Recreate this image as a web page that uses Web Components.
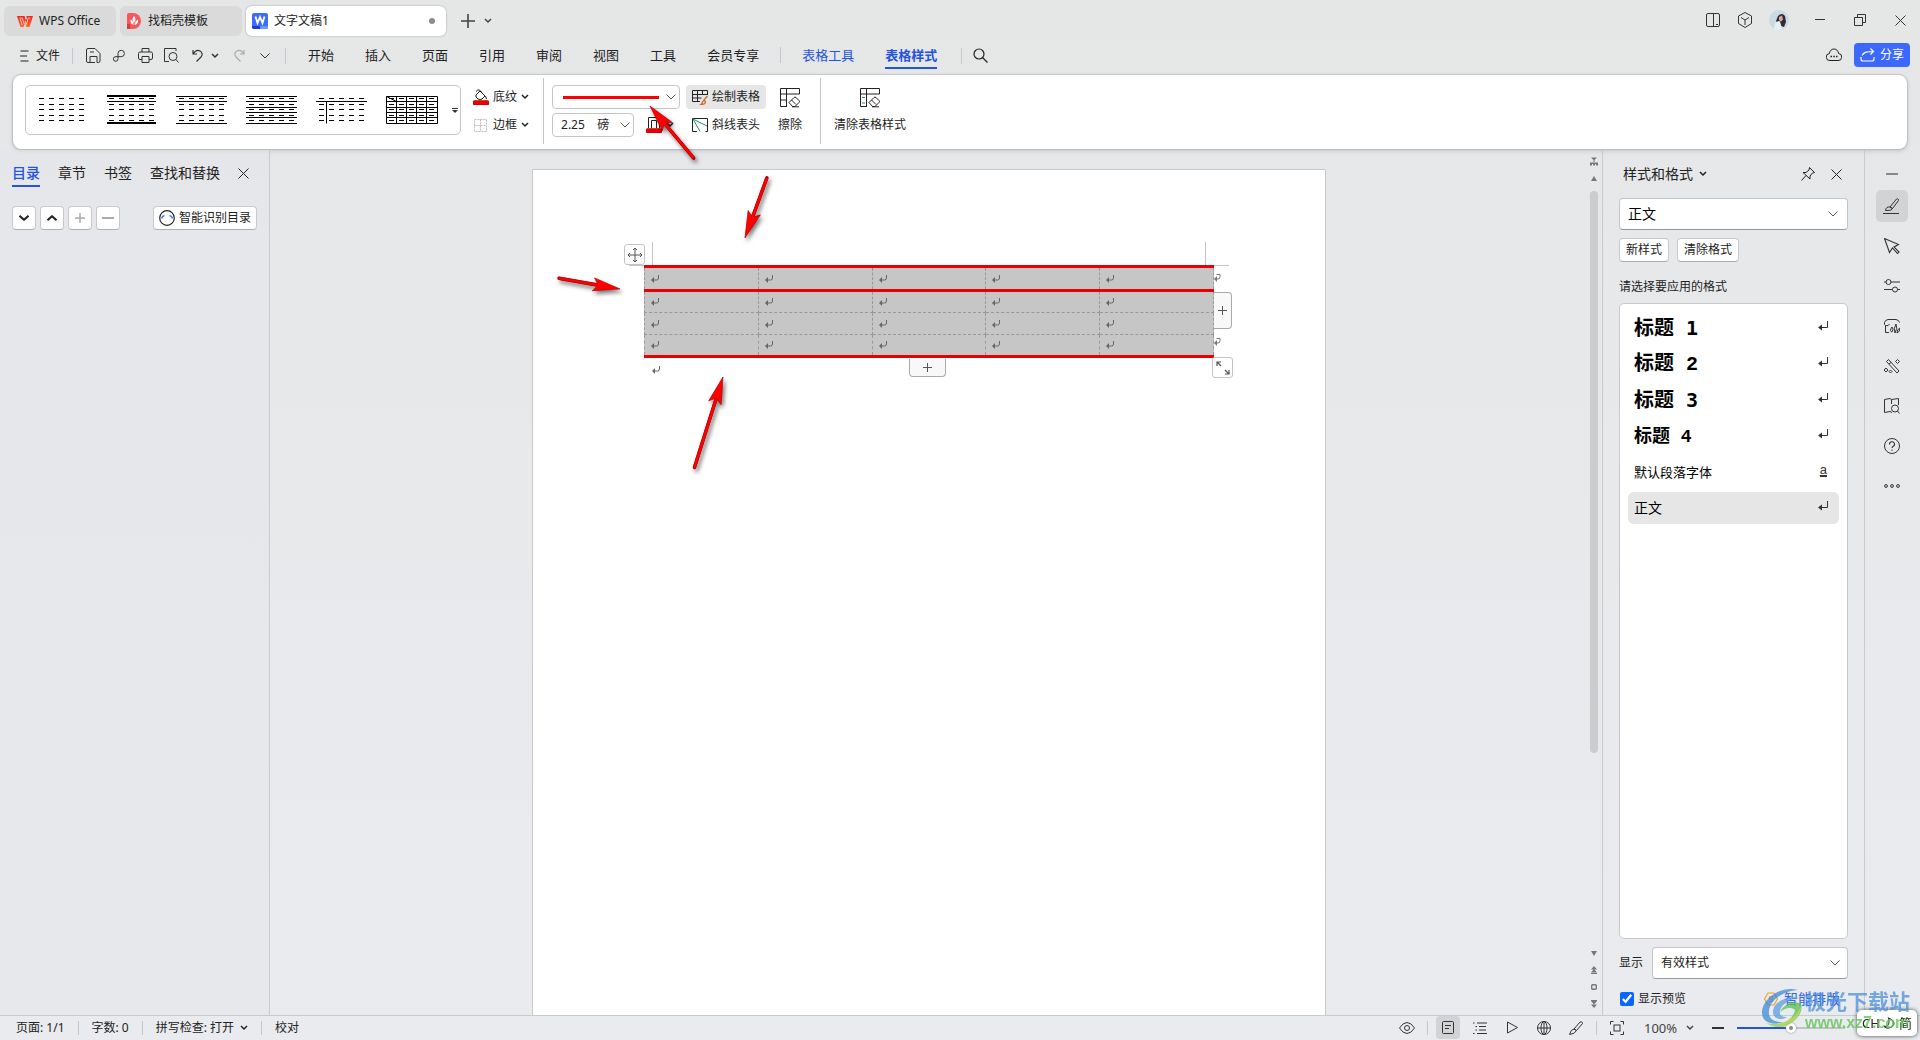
<!DOCTYPE html>
<html lang="zh-CN">
<head>
<meta charset="utf-8">
<title>WPS Office</title>
<style>
  html, body { margin: 0; height: 100%; }
  body {
    font: 12px/16px "Noto Sans", "Noto Sans CJK SC", sans-serif;
    color: #222;
    background: linear-gradient(180deg, #e5e6e6 0, #e7e8ea 25%, #eaebee 100%);
    overflow: hidden;
  }
</style>
</head>
<body>
<wps-app></wps-app>
<script>
const BASE = `
  *, *::before { box-sizing: border-box; }
  button, select, input { font: inherit; color: inherit; margin: 0; }
  button { background: none; border: 0; padding: 0; display: inline-flex; align-items: center; justify-content: center; white-space: nowrap; }
  a { color: inherit; text-decoration: none; }
  .sep { width: 1px; height: 16px; background: #c6c7c9; flex: none; }
`;
function define(name, css, html) {
  customElements.define(name, class extends HTMLElement {
    constructor() {
      super();
      const t = document.createElement('template');
      t.innerHTML = `<style>${BASE}${css}</style>${typeof html === 'function' ? html(this) : html}`;
      this.attachShadow({ mode: 'open' }).append(t.content.cloneNode(true));
    }
  });
}

/* Icon set: [width, height, markup] */
const ICONS = {
  wps: [16, 11, '<defs><linearGradient id="g" x1="0" y1="0" x2="0" y2="1"><stop offset="0" stop-color="#f4221f"/><stop offset="1" stop-color="#ff6a21"/></linearGradient></defs><path d="M0 0h7.500l1.200 4L10 2.500 9.200 0H16l-3.500 11H9.500L8 7l-1.500 4H3.500z" fill="url(#g)" stroke="none"/><path d="M2.800 2h2.400l2 6M13.300 2h-2l-2 6.500M5.200 9L3 2.500M8 5l1.200 3.500" stroke="#e9e9e8" stroke-width=".8"/>'],
  docer: [14, 16, '<path d="M0 2q0-2 2-2h4a8 8 0 0 1 0 16H0z" fill="#f4585a" stroke="none"/><path d="M0 11h3v5H0z" fill="#d83c40" stroke="none"/><path d="M7 3c2 2 2 4 0 7-2-3-2-5 0-7zM3.500 6.500c2.500 1 3 3 3 5.500-2.500-1-3.500-3-3-5.500zM11 6.500c-2 1-3.500 3-3.500 5.500 3-.5 4-3 3.500-5.500z" fill="#fff" stroke="none"/>'],
  word: [16, 16, '<rect width="16" height="16" rx="2" fill="#3e6bff" stroke="none"/><path d="M0 13h8v3H2q-2 0-2-2z" fill="#1e3fc4" stroke="none"/><path d="M8 13h8q0 3-2 3H8z" fill="#5b9bff" stroke="none"/><path d="M3.500 3.500l2 6.500L8 4l2.500 6 2-6.500" stroke="#fff" stroke-width="1.800"/>'],
  plus: [14, 14, '<path d="M7 0v14M0 7h14" stroke-width="1.600"/>'],
  plus10: [10, 10, '<path d="M5 0v10M0 5h10" stroke-width="1.400"/>'],
  down: [8, 6, '<path d="M1 1l3 3 3-3" stroke-width="1.500"/>'],
  down2: [10, 6, '<path d="M.5 .8l4.500 4 4.500-4" stroke-width="2"/>'],
  up2: [10, 6, '<path d="M.5 5.200l4.500-4 4.500 4" stroke-width="2"/>'],
  downwide: [10, 6, '<path d="M.5.500L5 5l4.500-4.500"/>'],
  panes: [15, 15, '<rect x=".5" y=".5" width="13" height="13" rx="1.500"/><path d="M7.500.500v13M10 11.500h2"/>'],
  cube: [16, 16, '<path d="M8 .5l6.500 3.500v7.500L8 15.500 1.500 11.500V4zM4 5.500L8 8l4-2.500M8 8v5"/>'],
  avatar: [20, 20, '<circle cx="10" cy="10" r="10" fill="#c9dae3" stroke="none"/><path d="M9 6q4-4 7 0l1 6-2 5-3-1-1-5-3 1-1-1z" fill="#332b33" stroke="none"/><path d="M10 7l3-1.500 1 4-2 2-2-1.500z" fill="#d9aaa4" stroke="none"/><path d="M5 19l1-6 4-2 2 4 1 4q-4 2-8 0z" fill="#e6f0f4" stroke="none"/>'],
  min: [10, 2, '<path d="M0 .5h10"/>'],
  restore: [12, 12, '<path d="M.5 3.500h8v8h-8zM3.500 3.500v-3h8v8h-3"/>'],
  close: [11, 11, '<path d="M.5.500l10 10M10.500.500l-10 10"/>'],
  menu: [9, 12, '<path d="M.5 1h8M0 6h7M.5 11h8"/>'],
  save: [15, 15, '<path d="M4 14.500H2q-1.500 0-1.500-1.500V2Q.5.500 2 .5h7l5 5V13q0 1.500-1.500 1.500H11M4 14.500v-6h7v6M4 14.500h5M4 4h4"/>'],
  sharelink: [12, 13, '<path d="M5 9.500v-5a3.200 3.200 0 1 1 3.200 3.200H3a2.300 2.300 0 1 0 2 2"/>'],
  print: [15, 15, '<path d="M4 4V.500h7V4M4 11.500H2q-1.500 0-1.500-1.500V5.500Q.5 4 2 4h11q1.500 0 1.500 1.500V10q0 1.500-1.500 1.500h-2M4 8.500h7v6H4z"/>'],
  preview: [15, 15, '<path d="M.5 3V.500H12V3M.5 2v11.500H5"/><circle cx="9" cy="8.500" r="4"/><path d="M12 11.500l2.500 3"/>'],
  undo: [11, 13, '<path d="M1 1v4h4M1 5c2-3 5-4 7-3s3 3.500 1 6l-4.500 4.500" stroke-width="1.200"/>'],
  redo: [11, 13, '<path d="M10 1v4H6M10 5C8 2 5 1 3 2s-3 3.500-1 6l4.500 4.500" stroke-width="1.200"/>'],
  search: [15, 15, '<circle cx="6" cy="6" r="5" stroke-width="1.200"/><path d="M9.500 9.500l5 5" stroke-width="1.200"/>'],
  cloud: [16, 14, '<path d="M4 12.500a3.500 3.500 0 0 1-.5-7 4.500 4.500 0 0 1 9 0 3.500 3.500 0 0 1-.5 7z"/><path d="M4.500 8.500h1.500M7.300 8.500h1.500M10 8.500h1.500" stroke-width="1.500"/>'],
  share: [15, 14, '<path d="M1 9v2q0 2 2 2h9q2 0 2-2V9M2 7.500C4 4 7 3.500 13.500 3.500M10.500.500l3 3-3 3" stroke-width="1.200"/>'],
  fill: [16, 16, '<path d="M3 6l4-4 5 5-3 3q-2 1-4 0L3 8zM3 2.500q3-4 6 1.500M12.500 7l1 3"/><rect x="0" y="11.500" width="16" height="4.500" rx="1.500" fill="#e00" stroke="#900" stroke-width=".5"/>'],
  border: [13, 13, '<path d="M.5.500h12v12H.500zM6.500.500v12M.5 6.500h12" stroke="#bbb" stroke-dasharray="2 1"/>'],
  pencolor: [16, 16, '<path d="M2.500 11V.500h11V11M5.500 11V3.500h5V11"/><rect x="0" y="11.500" width="16" height="4.500" rx="1.500" fill="#e00" stroke="#900" stroke-width=".5"/>'],
  draw: [16, 16, '<path d="M8 12.500H.500V1.500h15V6M.5 5.500h15M.5 9h9M5.500 1.500v11M10.500 1.500V6"/><path d="M15.500 7l-4 4.500M9 15.500q1.500-1 1.500-3l2-1 1 1q0 3-4.500 3z" stroke="#d0662a" stroke-width="1.200"/>'],
  slash: [16, 14, '<path d="M5 13.500H.500V.500h15v13h-2"/><path d="M1 1l14 7M1 1l7 12.500" stroke="#1f8f6f"/>'],
  erase: [20, 20, '<path d="M7 18.500H.500V.500h19V6H.500M6.500.500v18M.5 12h6"/><path d="M9 14.500l5-5q1-1 2 0l3 3q1 1 0 2l-4 4h-2.500zM11.500 12l4.500 4.500M12 18.800h7"/>'],
  clear: [20, 20, '<path d="M7 18.500H.500V.500h19V6H.500M6.500.500v18"/><path d="M2 9.500h3M2 15h3" stroke="#1f8f6f"/><path d="M9 14.500l5-5q1-1 2 0l3 3q1 1 0 2l-4 4h-2.500zM11.500 12l4.500 4.500M12 18.800h7"/>'],
  more: [6, 5, '<path d="M0 .5h6"/><path d="M0 2h6L3 5z" fill="currentColor" stroke="none"/>'],
  smart: [16, 16, '<circle cx="8" cy="8" r="7.300" stroke-width="1.200"/><path d="M2.500 8.500q.5-2.500 3-3M13.500 8.500q-.5-2.500-3-3" stroke="#4874e8" stroke-width="1.500"/>'],
  minus: [12, 2, '<path d="M0 1h12" stroke-width="2"/>'],
  pin: [14, 14, '<path d="M8.500.500l5 5-2 .5-2.500 3v3L2 5.500h3L8 3zM5 8.500L.500 13.500"/>'],
  brush: [17, 16, '<path d="M7 9l6.500-8q1.500-.5 2 .5v1L9.500 10.500zM7 9q-4-.5-4.500 3.500 4.500 0 5.500-.5 1.500-1 1.500-1.500zM0 15.500h16"/>'],
  pointer: [16, 16, '<path d="M.5.500l14 6L10 9l5 5-1.500 1.500L8.500 10l-3 4.500z" stroke-width="1.100"/>'],
  sliders: [16, 14, '<circle cx="4.500" cy="3" r="2.500"/><circle cx="11" cy="10.500" r="2.500"/><path d="M7 3h9M0 3h2M0 10.500h8.500M13.500 10.500H16"/>'],
  gallery: [16, 15, '<path d="M5 13.500H1.500v-7Q0 6 .5 3.500 1 1 4 .500h8q3 .5 3.500 3M1.500 6.500q3 1 4-1.500M8 13q-3-1 0-5 2 2 0 5zM11 14q-2-4 1-9 2 4-1 9zM13 14q0-4 3-5 0 4-3 5z"/>'],
  tools: [16, 15, '<path d="M2.500 2.500l2-2 10.500 11.500-2 2zM5 5l2-1.500"/><path d="M13.500.500l2 2-2 2-2-2zM2 9l2 2-2 2-2-2zM6.500 11l1.500 1.500L6.500 14 5 12.500z"/>'],
  book: [16, 16, '<path d="M6 13.500L.500 14.500V1.500L6 .5l1.500 1L14.500.500V7M7.500 1.500V6M6 13.500l2 1"/><circle cx="11" cy="10.500" r="3.500"/><path d="M13.500 13l2 2.500"/>'],
  help: [16, 16, '<circle cx="8" cy="8" r="7.500"/><path d="M5.500 6.500a2.500 2.500 0 1 1 3.500 2q-1 .5-1 1.500M8 11.500v1.200" stroke-width="1.100"/>'],
  dots: [16, 4, '<circle cx="2" cy="2" r="1.400"/><circle cx="8" cy="2" r="1.400"/><circle cx="14" cy="2" r="1.400"/>'],
  ret: [10, 10, '<path d="M9.500 0v6.500H2"/><path d="M0 6.500l4-3v6z" fill="currentColor" stroke="none"/>'],
  mark: [8, 8, '<path d="M7.500 0v3q0 2-2 2H2" stroke="#666"/><path d="M0 5l3-3v6z" fill="#666" stroke="none"/>'],
  endmark: [8, 8, '<path d="M2.500 .5h3.500v2q0 2.500-2 2.500H2" stroke="#777"/><path d="M0 5l3-3v6z" fill="#777" stroke="none"/>'],
  move: [16, 16, '<path d="M8 1v14M1 8h14M6 3l2-2 2 2M6 13l2 2 2-2M3 6L1 8l2 2M13 6l2 2-2 2" stroke="#555"/>'],
  resize: [14, 14, '<path d="M1 5V1h4M1 1l4 4M13 9v4H9M13 13L9 9" stroke="#555" stroke-width="1.200"/>'],
  rulertop: [8, 9, '<path d="M1 .5h6L4.500 3v2h-1V3zM0 5.500h8v3H0z" fill="#777" stroke="none"/><path d="M2.500 7v2M5.500 7v2" stroke="#eee"/>'],
  tup: [6, 5, '<path d="M3 0l3 5H0z" fill="#777" stroke="none"/>'],
  tdown: [6, 5, '<path d="M3 5l3-5H0z" fill="#777" stroke="none"/>'],
  tup2: [6, 8, '<path d="M3 0l3 3.500H0zM3 3l3 3.500H0zM0 7h6v1H0z" fill="#777" stroke="none"/>'],
  tdown2: [6, 8, '<path d="M3 4.500L6 1H0zM3 8l3-3.500H0zM0 0h6v1H0z" fill="#777" stroke="none"/>'],
  sq: [6, 6, '<rect x=".7" y=".7" width="4.600" height="4.600" rx="1" stroke="#777" stroke-width="1.400"/>'],
  eye: [16, 12, '<path d="M.5 6Q4 .5 8 .5T15.500 6Q12 11.500 8 11.500T.500 6z"/><circle cx="8" cy="6" r="2.500"/>'],
  pageview: [12, 13, '<rect x=".5" y=".5" width="11" height="12" rx="1"/><path d="M3 4.500h6M3 7.500h4" stroke-width="1.200"/>'],
  outline: [14, 12, '<path d="M4 1h10M6 4.500h7M6 8h7M4 11.500h10M0 1h1.500M2.500 4.500h1.500M2.500 8h1.500M0 11.500h1.500"/>'],
  play: [11, 13, '<path d="M.5 1v11l10-5.500z"/>'],
  globe: [14, 14, '<circle cx="7" cy="7" r="6.500"/><ellipse cx="7" cy="7" rx="3" ry="6.500"/><path d="M.5 7h13M7 .5v13"/>'],
  pen: [14, 14, '<path d="M5 8l6-7q2-.8 2.500 1v.5L7.500 9.500zM5 8Q2 8 .5 13.500 6 13 7.500 9.500z"/>'],
  fit: [14, 14, '<path d="M.5 3.500v-3h3M10.500.500h3v3M13.500 10.500v3h-3M3.500 13.500h-3v-3"/><rect x="4" y="4" width="6" height="6"/>'],
  coin: [14, 14, '<path d="M4 1h6l3.500 6-3.500 6H4L.500 7z" stroke="#f0a030" stroke-width="1.200"/><path d="M9 4.500H6q-1.500 1.500 0 2.500h2q1.500 1 0 2.500H5" stroke="#f0a030" stroke-width="1.200"/>'],
  moon: [12, 12, '<path d="M5 .8q6 2 6 6.200-1.500 4-6 4.200-2 0-4-1.700 5 0 5-4.500T5 .8z" stroke="#222"/>'],
};
customElements.define('ui-icon', class extends HTMLElement {
  constructor() { super(); this.attachShadow({ mode: 'open' }); }
  connectedCallback() {
    const [w, h, m] = ICONS[this.getAttribute('name')];
    this.shadowRoot.innerHTML = `<style>:host{display:inline-flex;flex:none}svg{display:block}</style>
      <svg width="${w}" height="${h}" viewBox="0 0 ${w} ${h}" fill="none" stroke="currentColor" aria-hidden="true">${m}</svg>`;
  }
});
const ic = n => `<ui-icon name="${n}"></ui-icon>`;

/* Drop-down: the select and its chevron share one grid cell */
define('ui-select', `
  :host { display: grid; }
  select, ui-icon { grid-area: 1 / 1; }
  select { appearance: none; width: 100%; height: var(--h, 24px); background: #fff; border: 1px solid #c4c5c7; border-radius: 4px; padding: 0 24px 0 8px; }
  :host([line]) select { background: linear-gradient(#f00, #f00) 10px center / 96px 3px no-repeat #fff; }
  :host([deep]) select { border-bottom-color: #999; }
  ui-icon { justify-self: end; align-self: center; margin-right: var(--mr, 8px); pointer-events: none; color: #555; }
`, el => `<select id="s" aria-label="${el.getAttribute('label') || ''}"><option>${el.getAttribute('value') || ''}</option></select>${ic(el.getAttribute('icon') || 'downwide')}`);

define('wps-titlebar', `
  :host { display: flex; height: 38px; align-items: flex-start; }
  nav { display: flex; gap: 4px; padding: 6px 0 0 4px; }
  .tab { height: 30px; border-radius: 6px; background: #d9dad9; justify-content: flex-start; color: #222; }
  .home { width: 112px; padding-left: 13px; gap: 6px; }
  .store { width: 122px; padding-left: 7px; gap: 7px; }
  .doc { width: 200px; padding: 0 11px 0 6px; gap: 6px; background: #fff; box-shadow: 0 0 2px #999; }
  .doc i { margin-left: auto; width: 6px; height: 6px; border-radius: 50%; background: #8c8c8c; }
  .new { height: 42px; display: flex; align-items: center; padding-left: 15px; gap: 9px; color: #444; }
  .right { margin-left: auto; display: flex; height: 40px; align-items: center; color: #333; }
  .right button { width: 32px; height: 32px; }
  .right .ava { width: 20px; margin: 0 11px 0 8px; }
  .right .win { width: 40px; }
`, `<nav role="tablist">
    <button class="tab home" role="tab">${ic('wps')}WPS Office</button>
    <button class="tab store" role="tab">${ic('docer')}找稻壳模板</button>
    <button class="tab doc" role="tab" aria-selected="true">${ic('word')}文字文稿1<i></i></button>
  </nav>
  <div class="new"><button aria-label="新建">${ic('plus')}</button><button aria-label="更多">${ic('down')}</button></div>
  <div class="right"><button aria-label="分屏">${ic('panes')}</button><button aria-label="应用">${ic('cube')}</button><button class="ava" aria-label="账号">${ic('avatar')}</button>
  <button class="win" aria-label="最小化">${ic('min')}</button><button class="win" aria-label="还原">${ic('restore')}</button><button class="win" aria-label="关闭">${ic('close')}</button></div>`);

define('wps-menubar', `
  :host { display: flex; height: 35px; align-items: center; padding: 0 10px 0 20px; box-sizing: border-box; color: #222; }
  .file { gap: 7px; margin-right: 12px; }
  .quick { display: flex; padding: 0 7px; align-items: center; }
  .quick button { width: 26px; height: 26px; color: #333; }
  .quick .small { width: 10px; margin-right: 6px; }
  .quick .off { color: #aaa; }
  nav { display: flex; gap: 31px; padding: 0 24px 2px 22px; align-items: center; font-size: 13px; line-height: 20px; }
  nav .sep { margin: 0 -10px; }
  nav button { height: 28px; }
  .blue { color: #2453e0; }
  .on { font-weight: 700; box-shadow: inset 0 -2px #2453e0; }
  .find { margin-left: 11px; }
  .right { margin-left: auto; display: flex; gap: 12px; align-items: center; padding-bottom: 1px; }
  .share { width: 56px; height: 24px; border-radius: 4px; background: #3c68fd; color: #fff; gap: 5px; }
`, `<button class="file">${ic('menu')}文件</button><span class="sep"></span>
  <div class="quick">
    <button aria-label="保存">${ic('save')}</button><button aria-label="输出">${ic('sharelink')}</button><button aria-label="打印">${ic('print')}</button><button aria-label="预览">${ic('preview')}</button><button aria-label="撤销">${ic('undo')}</button><button class="small" aria-label="撤销列表">${ic('down')}</button><button class="off" aria-label="恢复">${ic('redo')}</button><button aria-label="自定义">${ic('downwide')}</button>
  </div><span class="sep"></span>
  <nav role="tablist">${['开始','插入','页面','引用','审阅','视图','工具','会员专享'].map(t => `<button role="tab">${t}</button>`).join('')}
    <span class="sep"></span><button class="blue" role="tab">表格工具</button><button class="blue on" role="tab" aria-selected="true">表格样式</button></nav>
  <span class="sep"></span><button class="find" aria-label="查找">${ic('search')}</button>
  <div class="right"><button aria-label="云同步">${ic('cloud')}</button><button class="share">${ic('share')}分享</button></div>`);

/* Table style thumbnails */
const DASH = [2.5, 8.5, 13.5, 19.5, 24.5].map(y => `M3 ${y}h45`).join('');
const dashes = `<path d="${DASH}" stroke-dasharray="5 5"/>`;
const THUMBS = [
  dashes,
  dashes + '<path d="M1 0h49M1 27h49" stroke-width="2"/><path d="M1 5.500h49"/>',
  dashes + '<path d="M0 .5h51M0 5.500h51M0 27.500h51"/>',
  dashes + '<path d="M0 .5h51M0 5.500h51M0 11.500h51M0 16.500h51M0 21.500h51M0 27.500h51"/>',
  dashes + '<path d="M0 5.500h51M10.500 5.500v22"/>',
  dashes + '<path d="M.5 .5h51v27H.500zM0 5.500h51M0 11.500h51M0 16.500h51M0 21.500h51M10.500.500v27M20.500.500v27M30.500.500v27M40.500.500v27M.5.500l10 5"/>',
];
define('wps-ribbon', `
  :host { display: flex; height: 74px; margin: 2px 13px 1px; padding: 0 12px 2px; align-items: center; background: #fff; border-radius: 8px; box-shadow: 0 0 2px #888, 0 2px 5px #0002; color: #222; }
  .gallery { width: 436px; height: 50px; margin-bottom: 2px; border: 1px solid #c4c5c7; border-radius: 5px; display: flex; align-items: center; gap: 18px; padding: 0 2px 0 10px; }
  .gallery .more { margin: 0 0 0 -4px; color: #333; }
  .gallery svg { display: block; overflow: visible; }
  .col { display: flex; flex-direction: column; gap: 4px; }
  .col > *, .row { height: 24px; display: flex; align-items: center; justify-content: flex-start; }
  .col > ui-select { display: grid; justify-content: stretch; }
  .fmt { margin: 0 14px 0 12px; }
  .fmt button { gap: 4px; }
  .fmt ui-icon[name=border] { margin: 0 2px 0 1px; }
  .sep { height: 66px; }
  .line { margin: 0 6px 0 8px; }
  .line .wide { width: 128px; }
  .row ui-select { width: 82px; }
  .pc { margin-left: 12px; gap: 4px; }
  .draw button { width: 80px; padding-left: 6px; gap: 4px; border-radius: 4px; }
  .draw .on { background: #e6e6e6; }
  .big { display: flex; flex-direction: column; gap: 9px; height: 50px; justify-content: flex-start; padding-top: 2px; }
  .er { margin: 0 18px 0 12px; } .cl { margin-left: 13px; }
`, `<div class="gallery">${THUMBS.map((t, i) => `<button aria-label="样式 ${i + 1}"><svg width="52" height="28" fill="none" stroke="#000">${t}</svg></button>`).join('')}<button class="more" aria-label="更多样式">${ic('more')}</button></div>
  <div class="col fmt"><button>${ic('fill')}底纹${ic('down')}</button><button>${ic('border')}边框${ic('down')}</button></div>
  <span class="sep"></span>
  <div class="col line"><ui-select class="wide" line label="线型" style="--mr:4px"></ui-select>
    <div class="row"><ui-select label="线宽" value="2.25 &nbsp;&nbsp; 磅" style="--mr:4px"></ui-select><button class="pc" aria-label="边框颜色">${ic('pencolor')}${ic('down')}</button></div></div>
  <div class="col draw"><button class="on">${ic('draw')}绘制表格</button><button>${ic('slash')}斜线表头</button></div>
  <button class="big er">${ic('erase')}擦除</button><span class="sep"></span>
  <button class="big cl">${ic('clear')}清除表格样式</button>`);

define('wps-outline', `
  :host { display: flex; flex-direction: column; width: 270px; box-sizing: border-box; flex: none; border-right: 1px solid #c9cacc; padding: 9px 12px; color: #222; background: #e4e6ea80; }
  nav { display: flex; gap: 18px; font-size: 14px; line-height: 20px; align-items: center; height: 28px; }
  nav button { height: 28px; }
  nav .on { color: #2453e0; font-weight: 500; box-shadow: inset 0 -2px #2453e0; }
  .tools { display: flex; gap: 4px; margin-top: 19px; }
  .tools button { width: 24px; height: 24px; background: #fff; border: 1px solid #c8c9cc; border-bottom-color: #b0b0b3; border-radius: 4px; }
  .tools .off { color: #aaa; }
  .tools .ai { width: 104px; margin-left: auto; gap: 4px; }
`, `<nav role="tablist"><button class="on" role="tab" aria-selected="true">目录</button><button role="tab">章节</button><button role="tab">书签</button><button role="tab">查找和替换</button><button aria-label="关闭">${ic('close')}</button></nav>
  <div class="tools"><button aria-label="展开">${ic('down2')}</button><button aria-label="收起">${ic('up2')}</button><button class="off" aria-label="升级">${ic('plus10')}</button><button class="off" aria-label="降级">${ic('minus')}</button><button class="ai">${ic('smart')}智能识别目录</button></div>`);

define('doc-table', `
  :host { display: block; position: relative; width: 570px; }
  table { border-collapse: collapse; width: 570px; background: #c6c6c6; table-layout: fixed; }
  td { height: 22px; padding: 0 0 0 6px; border: 1px dashed #999; line-height: 0; vertical-align: middle; }
  tr:first-child td { border-top: 3px solid #ea0000; border-bottom: 3px solid #ea0000; height: 24px; }
  tr:last-child td { border-bottom: 3px solid #ea0000; }
  .h { position: absolute; background: #f8f8f8; border: 1px solid #aaa; color: #555; }
  .mv { left: -20px; top: -21px; width: 21px; height: 21px; border-radius: 3px; background: #fff; border-color: #c4c4c4; }
  .rt { left: 570px; top: 27px; width: 18px; height: 37px; border-left: 0; border-radius: 0 4px 4px 0; }
  .bt { left: 265px; top: 94px; width: 37px; height: 18px; border-top: 0; border-radius: 0 0 4px 4px; }
  .rs { left: 568px; top: 92px; width: 21px; height: 21px; border-radius: 3px; background: #fff; border-color: #c4c4c4; }
  .c { position: absolute; background: #c4c4c4; }
  .v1 { left: 8px; top: -23px; width: 1px; height: 23px; } .v2 { left: 561px; top: -23px; width: 1px; height: 23px; }
  .h1 { left: -15px; top: 0; width: 15px; height: 1px; } .h2 { left: 570px; top: 0; width: 15px; height: 1px; }
  .e { position: absolute; left: 570px; line-height: 0; } .e1 { top: 9px; } .e2 { top: 73px; }
  .small { width: 9px; height: 9px; background: linear-gradient(#555,#555) center / 9px 1px no-repeat, linear-gradient(#555,#555) center / 1px 9px no-repeat; }
`, `<table aria-label="文档表格"><tbody>${`<tr>${`<td>${ic('mark')}</td>`.repeat(5)}</tr>`.repeat(4)}</tbody></table>
  <span class="c v1"></span><span class="c v2"></span><span class="c h1"></span><span class="c h2"></span>
  <span class="e e1">${ic('endmark')}</span><span class="e e2">${ic('endmark')}</span>
  <button class="h mv" aria-label="移动">${ic('move')}</button><button class="h rt" aria-label="添加列"><span class="small"></span></button><button class="h bt" aria-label="添加行"><span class="small"></span></button><button class="h rs" aria-label="缩放">${ic('resize')}</button>`);

define('wps-canvas', `
  :host { display: flex; flex: 1; min-width: 0; overflow: hidden; }
  .view { flex: 1; display: flex; justify-content: center; padding: 19px 0 0 2px; }
  .page { width: 794px; background: #fff; border: 1px solid #c8c9cb; border-bottom: 0; padding: 95px 111px; }
  .after { padding: 8px; line-height: 0; }
  .scroll { width: 16px; display: flex; flex-direction: column; align-items: center; padding: 7px 0 7px; gap: 10px; }
  .thumb { width: 8px; height: 562px; border-radius: 4px; background: #cbccce; }
  .rest { flex: 1; }
`, `<div class="view"><article class="page"><doc-table></doc-table><div class="after">${ic('mark')}</div></article></div>
  <div class="scroll">${ic('rulertop')}${ic('tup')}<div class="thumb"></div><div class="rest"></div>${ic('tdown')}${ic('tup2')}${ic('sq')}${ic('tdown2')}</div>`);

define('style-item', `
  :host { display: flex; align-items: center; justify-content: space-between; height: 32px; margin: 0 8px 4px; padding: 0 11px 0 6px; border-radius: 6px; color: #000; }
  :host([on]) { background: #e6e6e6; }
  ui-icon, .a { color: #333; margin-bottom: 4px; }
  .a { font: 13px/12px "Liberation Sans", sans-serif; border-bottom: 1px solid #333; text-decoration: underline; text-underline-offset: 1px; margin-right: 1px; }
`, el => `<slot></slot>${el.hasAttribute('char') ? '<span class="a">a</span>' : ic('ret')}`);

define('wps-styles', `
  :host { display: flex; flex-direction: column; width: 263px; box-sizing: border-box; flex: none; border-left: 1px solid #c9cacc; border-right: 1px solid #c9cacc; padding: 9px 16px 8px; color: #222; }
  header { display: flex; align-items: center; height: 30px; font-size: 14px; line-height: 20px; padding: 0 6px 0 4px; gap: 16px; }
  header .t { gap: 6px; margin-right: auto; }
  .cur { --h: 32px; font-size: 14px; margin-top: 9px; color: #000; }
  .btns { display: flex; gap: 8px; margin: 8px 0 17px; }
  .btns button { height: 24px; padding: 0 6px; background: #fff; border: 1px solid #c8c9cc; border-bottom-color: #aaa; border-radius: 4px; }
  .list { flex: 1; margin-top: 8px; padding-top: 8px; background: #fff; border: 1px solid #c8c9cc; border-radius: 5px; }
  .m { font: 700 20px/32px "DejaVu Sans Mono", "Noto Sans CJK SC", monospace; }
  .n { font: 700 20px/32px "Liberation Mono", "Noto Sans CJK SC", monospace; padding-top: 2px; }
  .s { font-size: 18px; }
  .b { font-size: 13px; } .z { font-size: 14px; }
  .show { display: flex; align-items: center; justify-content: space-between; margin-top: 8px; }
  .show ui-select { width: 196px; --h: 32px; }
  .prev { display: flex; align-items: center; margin-top: 12px; height: 16px; }
  .prev input { width: 14px; height: 14px; margin: 0 4px 0 1px; accent-color: #0a66ff; }
  .prev a { margin-left: auto; margin-right: 8px; color: #2f62f0; font-size: 14px; display: flex; gap: 6px; align-items: center; }
`, `<header><button class="t">样式和格式${ic('down')}</button><button aria-label="固定">${ic('pin')}</button><button aria-label="关闭">${ic('close')}</button></header>
  <ui-select class="cur" deep icon="downwide" label="当前样式" value="正文" style="--mr:10px"></ui-select>
  <div class="btns"><button>新样式</button><button>清除格式</button></div>
  <div>请选择要应用的格式</div>
  <div class="list">
    <style-item><span class="m">标题 1</span></style-item><style-item><span class="n">标题 2</span></style-item><style-item><span class="m">标题 3</span></style-item><style-item><span class="n s">标题 4</span></style-item><style-item char><span class="b">默认段落字体</span></style-item><style-item on><span class="z">正文</span></style-item>
  </div>
  <div class="show"><span>显示</span><ui-select deep label="显示" value="有效样式"></ui-select></div>
  <div class="prev"><input type="checkbox" id="pv" checked><label for="pv">显示预览</label><a href="#">${ic('coin')}智能排版</a></div>`);

define('wps-sidebar', `
  :host { display: flex; flex-direction: column; align-items: center; gap: 8px; width: 55px; flex: none; color: #333; padding: 16px 2px 0 0; box-sizing: border-box; }
  button { width: 32px; height: 32px; border-radius: 5px; }
  button.on { background: #d2d3d4; }
  button.m { color: #888; height: 16px; }
`, `<button class="m" aria-label="收起">${ic('minus')}</button><button class="on" aria-label="样式">${ic('brush')}</button>${['pointer','sliders','gallery','tools','book','help','dots'].map(n => `<button aria-label="${n}">${ic(n)}</button>`).join('')}`);

define('wps-status', `
  :host { display: flex; height: 25px; box-sizing: border-box; flex: none; align-items: center; border-top: 1px solid #c9cacc; padding: 0 47px 1px 16px; color: #222; }
  .left, .right { display: flex; align-items: center; }
  .left { gap: 13px; } .right { gap: 8px; margin-left: auto; }
  .sep { height: 14px; }
  .left button { gap: 6px; }
  .right button { width: 24px; height: 23px; border-radius: 4px; color: #333; }
  .right .on { background: #d2d3d5; }
  .right .zoom { width: 64px; padding: 0 7px; justify-content: space-between; font-size: 13px; color: #444; }
  .right .step { width: 18px; }
  input { appearance: none; width: 112px; height: 16px; background: linear-gradient(90deg, #2453e0 50%, #c0c2c6 50%) center / 108px 2px no-repeat; }
  input::-webkit-slider-thumb { appearance: none; box-sizing: border-box; width: 10px; height: 10px; border-radius: 50%; background: #888; border: 3px solid #fff; box-shadow: 0 0 2px #777; }
`, `<div class="left"><span>页面: 1/1</span><span class="sep"></span><span>字数: 0</span><span class="sep"></span><button>拼写检查: 打开${ic('down')}</button><span class="sep"></span><span>校对</span></div>
  <div class="right"><button aria-label="护眼">${ic('eye')}</button><span class="sep"></span><button class="on" aria-label="页面视图">${ic('pageview')}</button><button aria-label="大纲">${ic('outline')}</button><button aria-label="阅读">${ic('play')}</button><button aria-label="网页">${ic('globe')}</button><button aria-label="写作">${ic('pen')}</button><span class="sep"></span><button aria-label="适合">${ic('fit')}</button><button class="zoom">100%${ic('down')}</button><button class="step" aria-label="缩小">${ic('minus')}</button><input type="range" aria-label="缩放" value="50"><button class="step" aria-label="放大">${ic('plus')}</button></div>`);

define('ime-bar', `
  :host { position: fixed; right: 3px; bottom: 4px; width: 60px; height: 26px; box-sizing: border-box; display: flex; align-items: center; justify-content: space-between; padding: 0 5px; background: #fff; border-radius: 5px; box-shadow: 0 0 4px #444; color: #222; font-size: 13px; z-index: 1; }
`, `<span>CH</span>${ic('moon')}<span>简</span>`);

define('site-mark', `
  :host { position: fixed; right: 10px; bottom: 9px; display: flex; gap: 2px; z-index: 2; opacity: .75; pointer-events: none; }
  b { display: block; white-space: nowrap; }
  .a { font-size: 21px; line-height: 28px; color: #4a8fd8; }
  .b { font: 700 16px/16px "Liberation Sans", sans-serif; color: #58c04c; }
`, `<svg width="42" height="44" viewBox="0 0 42 44"><path d="M37 3C20-2 0 12 1 27c1 9 12 12 21 8-10 0-15-4-14-11C9 13 22 4 37 3z" fill="#3d8bd4"/><path d="M38 11C27 8 12 15 12 25c0 7 8 9 14 5-5 0-8-2-7-6 1-6 9-12 19-13z" fill="#5a9fe0"/><path d="M19 25c3-7 13-13 21-8 3 10-8 22-24 22 10-3 17-9 18-16-5-4-11-1-15 2z" fill="#58c04c"/><path d="M5 36c15 4 29-4 35-16-1 14-18 27-35 16z" fill="#9bcf3f"/></svg>
  <div><b class="a">极光下载站</b><b class="b">www.xz7.com</b></div>`);

/* Red pointer arrows: tip position, direction and length */
const arrow = (x, y, deg, len) => `<g transform="translate(${x} ${y}) rotate(${deg})"><path d="M20 0H${len}" stroke="#a00" stroke-width="3.400" stroke-linecap="round"/><path d="M0 0L27-6.500 23-1.200H${len}V1.200H23L27 6.500z" fill="#f00" stroke="#a00" stroke-width=".6"/><path d="M20 0H${len}" stroke="#f00" stroke-width="2.200"/></g>`;
define('note-arrows', `
  :host { position: absolute; left: 0; top: 0; pointer-events: none; z-index: 3; }
  svg { display: block; filter: drop-shadow(2px 3px 2px #0008); }
`, `<svg width="900" height="500" fill="none">${arrow(650, 106, 50, 68)}${arrow(745, 238, -70, 64)}${arrow(620, 289, 190, 62)}${arrow(723, 377, 107.500, 95)}</svg>`);

define('wps-app', `
  :host { display: flex; flex-direction: column; height: 100vh; }
  main { flex: 1; display: flex; min-height: 0; }
`, `<wps-titlebar></wps-titlebar><wps-menubar></wps-menubar><wps-ribbon></wps-ribbon>
  <main><wps-outline></wps-outline><wps-canvas></wps-canvas><wps-styles></wps-styles><wps-sidebar></wps-sidebar></main>
  <wps-status></wps-status><ime-bar></ime-bar><site-mark></site-mark><note-arrows></note-arrows>`);
</script>
</body>
</html>
